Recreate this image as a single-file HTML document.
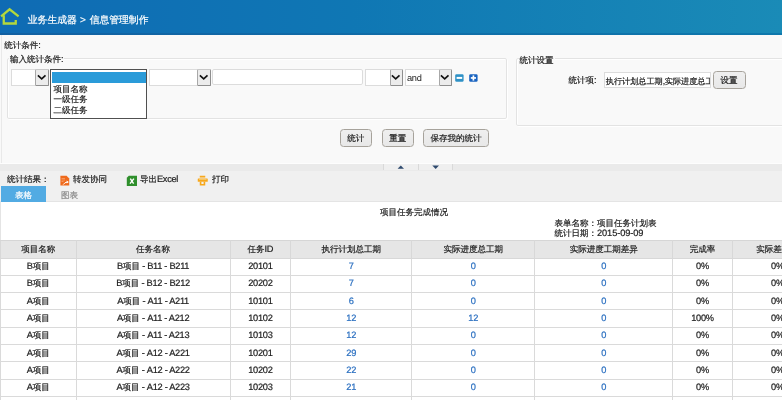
<!DOCTYPE html>
<html><head><meta charset="utf-8"><style>
*{box-sizing:border-box;margin:0;padding:0}
html,body{width:782px;height:400px;overflow:hidden}
body{position:relative;background:#f9f9f9;font-family:"Liberation Sans",sans-serif;font-size:8.5px;color:#1c1c1c;will-change:transform;text-rendering:geometricPrecision;-webkit-text-stroke-width:0.2px}
.a{position:absolute;white-space:nowrap;line-height:1}
.l{font-size:1.09em;letter-spacing:-0.3px}
#hdr .l{font-size:1.02em;letter-spacing:0.5px}
#hdr{left:0;top:0;width:782px;height:34px;background:linear-gradient(to right,#0f6bb4 0%,#0f77b4 45%,#1a8bb7 100%)}
#hdrb{left:0;top:33px;width:782px;height:1.5px;background:linear-gradient(to right,#1260a2,#0e78ac)}
#hdr .t{left:27.8px;top:16.4px;font-size:9.8px;color:#fff}
.ledge{left:0.5px;top:35px;width:1.2px;height:129px;background:#e9e9e9}
.fs{border:1px solid #e3e3e3;border-radius:2px;box-shadow:1px 1px 0 #fff,inset 1px 1px 0 #fff}
.leg{background:#f9f9f9;padding:0 1px}
.sel{background:#fff;border:1px solid #dcdcdc}
.btn3{background:#ececec;border:1px solid #8e8e8e;border-top-color:#c8c8c8;border-left-color:#a8a8a8;border-radius:1.5px}
.btn3 svg{position:absolute;left:0.8px;top:3.4px}
.inp{background:#fff;border:1px solid #dcdcdc}
.rb{background:linear-gradient(#efefef,#e8e8e8);border:1.4px solid #a6a29b;border-radius:3.5px;text-align:center;color:#1c1c1c}
.sep{background:#e2e2e2;width:1px;height:6px;top:164px}
#tb{left:0;top:170.5px;width:782px;height:31.5px;background:#f0f0f0;border-bottom:1px solid #e4e4e4}
#content{left:0;top:202px;width:782px;height:198px;background:#fff;border-left:1px solid #e4e4e4}
table{position:absolute;left:0;top:239.5px;border-collapse:collapse;table-layout:fixed;width:900px}
td,th{border:1px solid #dadada;height:17.33px;text-align:center;font-weight:normal;font-size:8.5px;color:#1c1c1c;padding:0;line-height:12px}
th{background:#e6e6e6;height:18px;padding-top:0;border-color:#d6d6d6 #d8d8d8 #d8d8d8}
td{padding-bottom:1.6px}
.bl{color:#2a6fc0}
</style></head><body>
<div id="hdr" class="a">
 <svg class="a" style="left:0;top:0" width="24" height="28" viewBox="0 0 24 28">
  <path d="M1.1,16.4 L9.6,9.3 L18.6,16.4" fill="none" stroke="#b4d73c" stroke-width="2.3"/>
  <path d="M3.75,15.3 V23.5 H15.75 V19.9" fill="none" stroke="#b4d73c" stroke-width="2.3"/>
 </svg>
 <div class="a t">业务生成器<span class="l"> &gt; </span>信息管理制作</div>
</div>
<div class="a" id="hdrb"></div>
<div class="a ledge"></div>
<div class="a" style="left:4.2px;top:41px;">统计条件<span class="l">:</span></div>
<div class="a fs" style="left:6.5px;top:58px;width:500.5px;height:60.5px"></div>
<div class="a leg" style="left:9px;top:55px">输入统计条件<span class="l">:</span></div>
<div class="a sel" style="left:11px;top:69.3px;width:37.5px;height:16.4px"></div>
<div class="a btn3" style="left:35px;top:69.3px;width:13.5px;height:16.4px"><svg width="10" height="7" viewBox="0 0 10 7"><path d="M0.9,1.3 L4.7,4.9 L8.5,1.3" fill="none" stroke="#111" stroke-width="1.6"/></svg></div>
<div class="a sel" style="left:149px;top:69.3px;width:61.5px;height:16.4px"></div>
<div class="a btn3" style="left:197px;top:69.3px;width:13.5px;height:16.4px"><svg width="10" height="7" viewBox="0 0 10 7"><path d="M0.9,1.3 L4.7,4.9 L8.5,1.3" fill="none" stroke="#111" stroke-width="1.6"/></svg></div>
<div class="a inp" style="left:212px;top:69.3px;width:151px;height:16px;border-radius:2px"></div>
<div class="a sel" style="left:365px;top:69.3px;width:37.5px;height:16.4px"></div>
<div class="a btn3" style="left:389.5px;top:69.3px;width:13.0px;height:16.4px"><svg width="10" height="7" viewBox="0 0 10 7"><path d="M0.9,1.3 L4.7,4.9 L8.5,1.3" fill="none" stroke="#111" stroke-width="1.6"/></svg></div>
<div class="a sel" style="left:404.5px;top:69.3px;width:47.5px;height:16.4px"></div>
<div class="a btn3" style="left:438.5px;top:69.3px;width:13.5px;height:16.4px"><svg width="10" height="7" viewBox="0 0 10 7"><path d="M0.9,1.3 L4.7,4.9 L8.5,1.3" fill="none" stroke="#111" stroke-width="1.6"/></svg></div>
<div class="a" style="left:407px;top:73.6px;color:#222;-webkit-text-stroke-width:0"><span class="l">and</span></div>
<svg class="a" style="left:454.5px;top:73.8px" width="9" height="8" viewBox="0 0 9 8"><rect x="0.2" y="0.2" width="8.4" height="7.6" rx="1.3" fill="#2e91c6"/><rect x="1.6" y="2.9" width="5.6" height="2" fill="#fff"/></svg>
<svg class="a" style="left:468.8px;top:73.8px" width="9" height="8" viewBox="0 0 9 8"><rect x="0.2" y="0.2" width="8.4" height="7.6" rx="1.3" fill="#1963c0"/><rect x="1.8" y="3.1" width="5.2" height="1.7" fill="#fff"/><rect x="3.55" y="1.4" width="1.7" height="5.2" fill="#fff"/></svg>
<div class="a" style="left:50px;top:69px;width:97px;height:50px;background:#fff;border:1px solid #505050">
 <div class="a" style="left:1px;top:1.5px;width:94px;height:11.5px;background:#2a9bd9"></div>
 <div class="a" style="left:2.5px;top:14.6px">项目名称</div>
 <div class="a" style="left:2.5px;top:25.4px">一级任务</div>
 <div class="a" style="left:2.5px;top:36.2px">二级任务</div>
</div>
<div class="a fs" style="left:515.5px;top:58px;width:300px;height:67.5px"></div>
<div class="a leg" style="left:518.5px;top:56px">统计设置</div>
<div class="a" style="left:568.5px;top:75.5px;">统计项<span class="l">:</span></div>
<div class="a inp" style="left:604px;top:72px;width:106.5px;height:15.5px;overflow:hidden"><div class="a" style="left:0.8px;top:3.8px;color:#222;font-size:8.15px">执行计划总工期<span class="l">,</span>实际进度总工期</div>
</div>
<div class="a rb" style="left:712.5px;top:71px;width:33px;height:18.4px;padding-top:4.3px">设置</div>
<div class="a rb" style="left:339.5px;top:129px;width:32.5px;height:17.6px;padding-top:3.9px">统计</div>
<div class="a rb" style="left:381.5px;top:129px;width:32.5px;height:17.6px;padding-top:3.9px">重置</div>
<div class="a rb" style="left:423px;top:129px;width:66px;height:17.6px;padding-top:3.9px">保存我的统计</div>
<div class="a" style="left:0;top:163.3px;width:782px;height:1px;background:#fdfdfd"></div>
<div class="a" style="left:0;top:164.3px;width:782px;height:6.5px;background:#eaeaea"></div>
<div class="a" style="left:383px;top:164.3px;width:35.5px;height:6.2px;background:#efefef;border-left:1px solid #d9d9d9;border-right:1px solid #d9d9d9"></div>
<div class="a" style="left:417.5px;top:164.3px;width:35.5px;height:6.2px;background:#efefef;border-left:1px solid #d9d9d9;border-right:1px solid #d9d9d9"></div>
<svg class="a" style="left:397px;top:165.3px" width="8" height="5"><path d="M0.6,3.8 L3.8,0.4 L7,3.8Z" fill="#2f4a6e"/></svg>
<svg class="a" style="left:432px;top:165.3px" width="8" height="5"><path d="M0.3,0.4 L7,0.4 L3.65,3.9Z" fill="#2f4a6e"/></svg>
<div id="tb" class="a">
<div class="a" style="left:7px;top:4.6px;color:#222">统计结果：</div>
<svg class="a" style="left:60px;top:4px" width="11" height="11" viewBox="0 0 11 11">
  <path d="M0.4,0.8 H6.6 L9.2,3.4 V10.5 H0.4Z" fill="#ef6a1c"/>
  <path d="M1.5,3.5 H5 M1.5,5 H5 M1.5,6.5 H3.5" stroke="#f8b58a" stroke-width="0.6"/>
  <path d="M3.2,9.6 Q4.6,7.2 7.6,7" fill="none" stroke="#fff" stroke-width="1"/>
  <path d="M6.6,5.6 L8.8,7 L6.8,8.6Z" fill="#fff"/>
 </svg>
<div class="a" style="left:73px;top:4.6px;color:#222">转发协同</div>
<svg class="a" style="left:126px;top:4px" width="12" height="12" viewBox="0 0 12 12">
  <path d="M2.8,0.8 H11 V11 H0.8 V2.8Z" fill="#2f8f2c"/>
  <path d="M4.3,3.6 L7.6,8.6 M7.9,3.6 L4,8.6" stroke="#fff" stroke-width="1.4"/>
 </svg>
<div class="a" style="left:140px;top:4.8px;color:#222">导出<span class="l">Excel</span></div>
<svg class="a" style="left:197px;top:4px" width="12" height="12" viewBox="0 0 12 12">
  <rect x="2.75" y="0.75" width="5.5" height="1.8" fill="#f7a81c"/>
  <rect x="0.75" y="3.4" width="10" height="3.4" rx="0.6" fill="#f7a81c"/>
  <rect x="2" y="4.3" width="7.5" height="0.7" fill="#fbd27c"/>
  <path d="M2.75,6.8 H8.25 V10.5 H2.75Z M4.4,6.8 V9 H6.6 V6.8Z" fill="#f7a81c" fill-rule="evenodd"/>
 </svg>
<div class="a" style="left:212px;top:4.6px;color:#222">打印</div>
<div class="a" style="left:1px;top:15.5px;width:45px;height:16px;background:#52abe3"></div>
<div class="a" style="left:15px;top:20.5px;color:#fff">表格</div>
<div class="a" style="left:61px;top:20.5px;color:#8a8a8a">图表</div>
</div>
<div id="content" class="a"></div>
<div class="a" style="left:380px;top:208.2px;">项目任务完成情况</div>
<div class="a" style="left:554.5px;top:218.9px;">表单名称：项目任务计划表</div>
<div class="a" style="left:554.5px;top:229.4px;">统计日期：<span class="l" style="letter-spacing:-0.1px">2015-09-09</span></div>
<table><colgroup><col style="width:75.5px"><col style="width:154.2px"><col style="width:60.4px"><col style="width:121.2px"><col style="width:122.9px"><col style="width:138.2px"><col style="width:59.3px"><col style="width:90.6px"><col style="width:150px"></colgroup>
<tr><th>项目名称</th><th>任务名称</th><th>任务<span class="l">ID</span></th><th>执行计划总工期</th><th>实际进度总工期</th><th>实际进度工期差异</th><th>完成率</th><th>实际差异率</th><th></th></tr>
<tr><td><span class="l">B</span>项目</td><td><span class="l">B</span>项目<span class="l"> - B11 - B211</span></td><td><span class="l">20101</span></td><td class="bl"><span class="l">7</span></td><td class="bl"><span class="l">0</span></td><td class="bl"><span class="l">0</span></td><td><span class="l">0%</span></td><td><span class="l">0%</span></td><td></td></tr>
<tr><td><span class="l">B</span>项目</td><td><span class="l">B</span>项目<span class="l"> - B12 - B212</span></td><td><span class="l">20202</span></td><td class="bl"><span class="l">7</span></td><td class="bl"><span class="l">0</span></td><td class="bl"><span class="l">0</span></td><td><span class="l">0%</span></td><td><span class="l">0%</span></td><td></td></tr>
<tr><td><span class="l">A</span>项目</td><td><span class="l">A</span>项目<span class="l"> - A11 - A211</span></td><td><span class="l">10101</span></td><td class="bl"><span class="l">6</span></td><td class="bl"><span class="l">0</span></td><td class="bl"><span class="l">0</span></td><td><span class="l">0%</span></td><td><span class="l">0%</span></td><td></td></tr>
<tr><td><span class="l">A</span>项目</td><td><span class="l">A</span>项目<span class="l"> - A11 - A212</span></td><td><span class="l">10102</span></td><td class="bl"><span class="l">12</span></td><td class="bl"><span class="l">12</span></td><td class="bl"><span class="l">0</span></td><td><span class="l">100%</span></td><td><span class="l">0%</span></td><td></td></tr>
<tr><td><span class="l">A</span>项目</td><td><span class="l">A</span>项目<span class="l"> - A11 - A213</span></td><td><span class="l">10103</span></td><td class="bl"><span class="l">12</span></td><td class="bl"><span class="l">0</span></td><td class="bl"><span class="l">0</span></td><td><span class="l">0%</span></td><td><span class="l">0%</span></td><td></td></tr>
<tr><td><span class="l">A</span>项目</td><td><span class="l">A</span>项目<span class="l"> - A12 - A221</span></td><td><span class="l">10201</span></td><td class="bl"><span class="l">29</span></td><td class="bl"><span class="l">0</span></td><td class="bl"><span class="l">0</span></td><td><span class="l">0%</span></td><td><span class="l">0%</span></td><td></td></tr>
<tr><td><span class="l">A</span>项目</td><td><span class="l">A</span>项目<span class="l"> - A12 - A222</span></td><td><span class="l">10202</span></td><td class="bl"><span class="l">22</span></td><td class="bl"><span class="l">0</span></td><td class="bl"><span class="l">0</span></td><td><span class="l">0%</span></td><td><span class="l">0%</span></td><td></td></tr>
<tr><td><span class="l">A</span>项目</td><td><span class="l">A</span>项目<span class="l"> - A12 - A223</span></td><td><span class="l">10203</span></td><td class="bl"><span class="l">21</span></td><td class="bl"><span class="l">0</span></td><td class="bl"><span class="l">0</span></td><td><span class="l">0%</span></td><td><span class="l">0%</span></td><td></td></tr>
<tr><td><span class="l">A</span>项目</td><td><span class="l">A</span>项目<span class="l"> - A12 - A224</span></td><td><span class="l">10204</span></td><td class="bl"><span class="l">21</span></td><td class="bl"><span class="l">0</span></td><td class="bl"><span class="l">0</span></td><td><span class="l">0%</span></td><td><span class="l">0%</span></td><td></td></tr>
</table>
</body></html>
